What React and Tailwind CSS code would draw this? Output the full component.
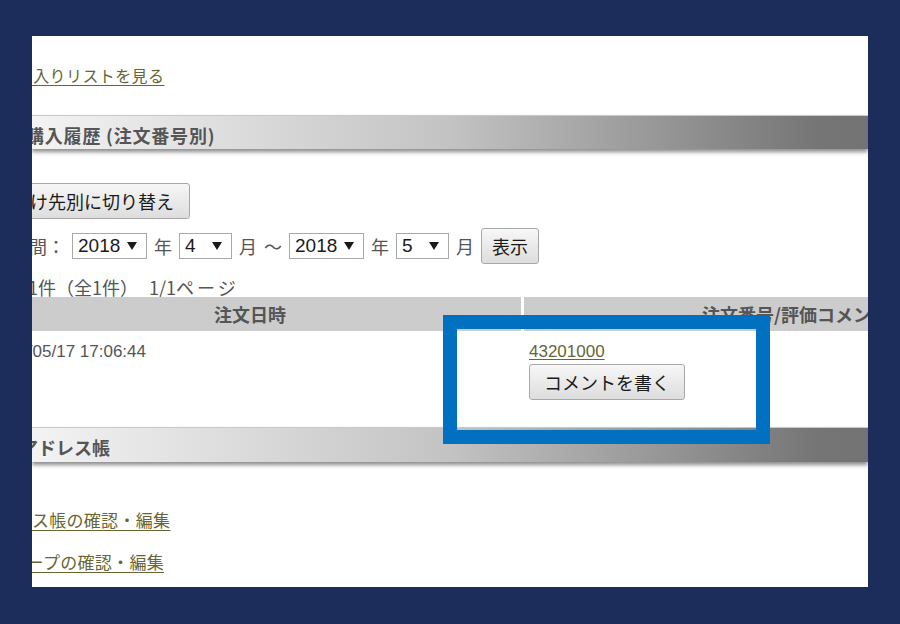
import React from "react";

function Arrow() {
  return (
    <svg width="10" height="8" viewBox="0 0 10 8" className="shrink-0">
      <polygon points="0,0 10,0 5,8" fill="#1a1a1a" />
    </svg>
  );
}

function Select({ value, wide }) {
  return (
    <div
      className={
        (wide ? "w-[75px]" : "w-[53px]") +
        " h-[26px] border border-[#a9a9a9] bg-white flex items-center justify-between pl-[5px] pr-[9px] font-['Liberation_Sans',sans-serif] text-[19px] leading-none text-[#1a1a1a]"
      }
    >
      <span>{value}</span>
      <Arrow />
    </div>
  );
}

function Btn({ children, className = "" }) {
  return (
    <div
      className={
        "flex items-center justify-center h-[36px] border border-[#a8a8a8] rounded-[3px] bg-[linear-gradient(to_bottom,#f7f7f7,#dddddd)] text-[18px] leading-none text-[#1a1a1a] " +
        className
      }
    >
      {children}
    </div>
  );
}

function Bar({ title, className = "", textClass = "" }) {
  return (
    <div
      className={
        "w-full border-t border-[#c9c9c9] bg-[linear-gradient(to_right,#f3f3f3_0%,#c3c3c3_50%,#757575_94%,#737373_100%)] shadow-[0_3px_4px_rgba(0,0,0,0.45)] flex items-center " +
        className
      }
    >
      <span className={"font-bold text-[18px] leading-[24px] text-[#555555] " + textClass}>{title}</span>
    </div>
  );
}

export default function App() {
  return (
    <div className="w-[900px] h-[624px] bg-[#1c2d5b] pt-[36px] pl-[32px]">
      <div className="relative w-[836px] h-[551px] bg-white overflow-hidden whitespace-nowrap font-['Noto_Sans_CJK_JP',sans-serif] text-[#555555]">
        <div className="flex flex-col">
          <div className="mt-[29px] ml-[-48px] h-[20px] text-[16px] leading-[20px] tracking-[0.4px]">
            <a className="text-[#666633] underline underline-offset-[3px]">お気に入りリストを見る</a>
          </div>

          <Bar
            title="購入履歴 (注文番号別)"
            className="mt-[30px] h-[34px] pt-[4px]"
            textClass="ml-[-6px] tracking-[0.8px]"
          />

          <div className="mt-[34px] ml-[-33px] flex">
            <Btn className="pl-[12px] pr-[15px]">届け先別に切り替え</Btn>
          </div>

          <div className="mt-[9px] ml-[-21px] h-[35px] flex items-center gap-[7px] text-[18px] leading-none">
            <span>期間：</span>
            <Select value="2018" wide />
            <span>年</span>
            <Select value="4" />
            <span>月</span>
            <span>～</span>
            <Select value="2018" wide />
            <span>年</span>
            <Select value="5" />
            <span>月</span>
            <Btn className="w-[58px] h-[35px]">表示</Btn>
          </div>

          <div className="mt-[14px] ml-[-32px] h-[20px] text-[18px] leading-[20px] text-[#555555]">
            <span>1～1件（全1件）</span>
            <span className="ml-[11px]">1/1</span>
            <span className="tracking-[3px]">ページ</span>
          </div>

          <div className="ml-[-53px] w-[1088px] grid grid-cols-[542px_543px] gap-x-[3px]">
            <div className="h-[34px] bg-[#cccccc] flex items-center justify-center font-bold text-[18px] leading-none text-[#555555]">
              注文日時
            </div>
            <div className="h-[34px] bg-[#cccccc] flex items-center justify-center font-bold text-[18px] leading-none text-[#555555]">
              注文番号/評価コメント
            </div>
            <div className="h-[96px] pt-[11px] pl-[11px] font-['Liberation_Sans',sans-serif] text-[17px] leading-[20px] text-[#555555]">
              2018/05/17 17:06:44
            </div>
            <div className="h-[96px] pt-[11px] pl-[5px] flex flex-col items-start">
              <div className="h-[20px] font-['Liberation_Sans',sans-serif] text-[17px] leading-[20px]">
                <a className="text-[#666633] underline underline-offset-[2px]">43201000</a>
              </div>
              <Btn className="mt-[2px] w-[156px]">コメントを書く</Btn>
            </div>
          </div>

          <Bar title="アドレス帳" className="h-[35px] pt-[4px]" textClass="ml-[-12px] text-[17.5px]" />

          <div className="mt-[48px] ml-[-52px] h-[20px] text-[17px] leading-[20px] tracking-[0.3px]">
            <a className="text-[#666633] underline underline-offset-[3px]">アドレス帳の確認・編集</a>
          </div>
          <div className="mt-[22px] ml-[-40px] h-[20px] text-[17px] leading-[20px] tracking-[0.3px]">
            <a className="text-[#666633] underline underline-offset-[3px]">グループの確認・編集</a>
          </div>
        </div>

        <div className="absolute left-[411px] top-[279px] w-[327px] h-[129px] border-[14px] border-[#0070c0]" />
      </div>
    </div>
  );
}
